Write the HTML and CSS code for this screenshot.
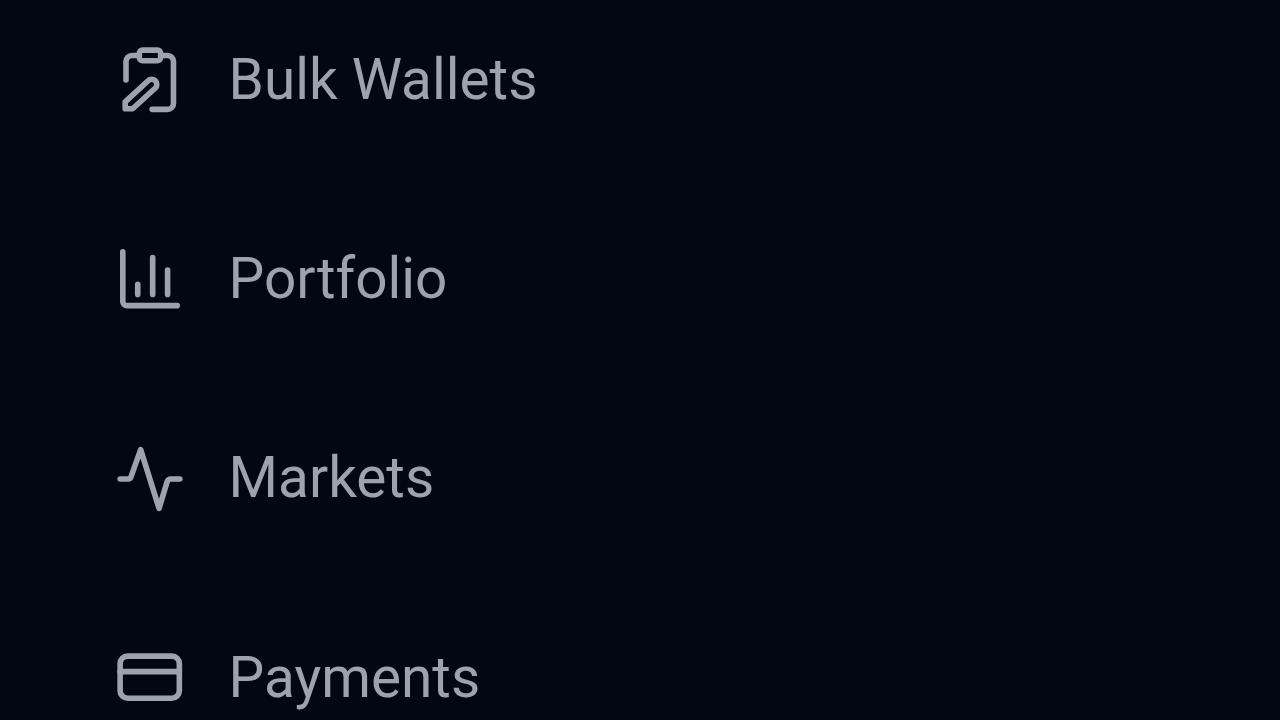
FILE: index.html
```html
<!DOCTYPE html>
<html>
<head>
    <meta charset="utf-8">
    <link rel="stylesheet" href="styles.css">
</head>
<body>
<nav class="menu">
    <a class="item">
        <svg class="icon" viewBox="0 0 24 24"><rect x="8" y="0.8" width="8" height="4" rx="1.2"/><path d="M8 2.8H5.2A2.2 2.2 0 0 0 3 5v7"/><path d="M16 2.8h2.6a2.2 2.2 0 0 1 2.2 2.2v15.8a2.2 2.2 0 0 1-2.2 2.2h-5.8"/><path d="M2.7 22.8v-2.6l8.6-7.9a1.9 1.9 0 0 1 2.7 2.7l-8.5 7.8z"/></svg>
        <span class="label">Bulk Wallets</span>
    </a>
    <a class="item">
        <svg class="icon" viewBox="0 0 24 24"><path d="M1.8 1.8V20.4a1.6 1.6 0 0 0 1.6 1.6H22.2"/><path d="M7.4 14v3.8"/><path d="M13 4v13.8"/><path d="M18.6 8.6v9.2"/></svg>
        <span class="label">Portfolio</span>
    </a>
    <a class="item">
        <svg class="icon" viewBox="0 0 24 24"><path d="M.8 12h3a1.2 1.2 0 0 0 1.1-.9L8.5 1l6.9 22 3-9.9a1.6 1.6 0 0 1 1.5-1.1h3.3"/></svg>
        <span class="label">Markets</span>
    </a>
    <a class="item">
        <svg class="icon" viewBox="0 0 24 24"><rect x="0.8" y="3.8" width="22.2" height="15.8" rx="2.8"/><path d="M.8 9.6H23"/></svg>
        <span class="label">Payments</span>
    </a>
</nav>
</body>
</html>
```

FILE: styles.css
```css
html, body {
    height: 100%;
}
body {
    margin: 0;
    background: #030712;
    overflow: hidden;
}
.menu {
    display: flex;
    flex-direction: column;
    gap: 135.4px;
    padding: 48px 0 0 118px;
}
.item {
    display: flex;
    align-items: center;
    gap: 46.6px;
    height: 64px;
    color: #9ca3af;
    font-family: "Roboto", sans-serif;
    font-size: 56.7px;
}
.label {
    padding-bottom: 2px;
}
.icon {
    width: 64px;
    height: 64px;
    flex: none;
    overflow: visible;
    fill: none;
    stroke: #9ca3af;
    stroke-width: 2.1;
    stroke-linecap: round;
    stroke-linejoin: round;
}
```
